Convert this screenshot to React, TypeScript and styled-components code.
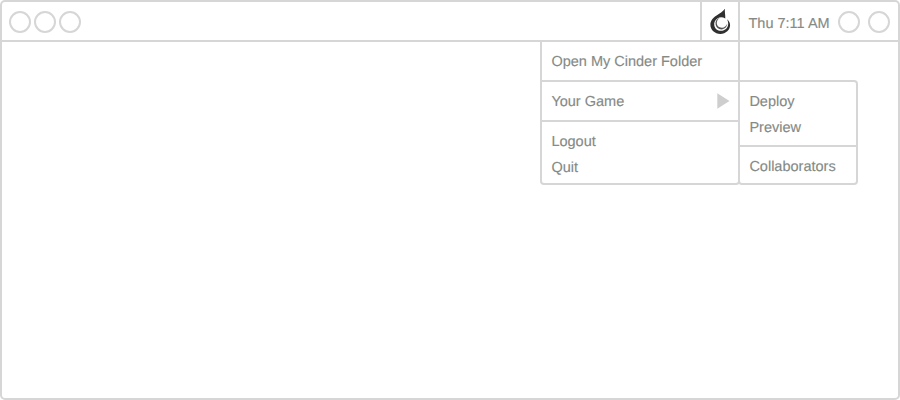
import React from "react";
import styled, { createGlobalStyle } from "styled-components";

const line = "#d6d6d6";

const GlobalStyle = createGlobalStyle`
  *, *::before, *::after { box-sizing: border-box; }
  body { margin: 0; background: #fff; }
`;

const Desktop = styled.div`
  position: relative;
  width: 900px;
  height: 400px;
  border: 2px solid ${line};
  border-radius: 5px;
  background: #fff;
  color: #858a86;
  font: 14.5px/26px "Liberation Sans", Arial, sans-serif;
  -webkit-text-stroke: 0.15px #858a86;
  text-rendering: geometricPrecision;
  white-space: nowrap;
  overflow: hidden;
`;

const MenuBar = styled.header`
  display: flex;
  align-items: stretch;
  height: 40px;
  border-bottom: 2px solid ${line};
`;

const Lights = styled.div`
  display: flex;
  flex: 1;
  align-items: center;
  gap: 3px;
  padding: 2px 0 0 7px;
`;

const Circle = styled.span`
  width: 22px;
  height: 22px;
  border: 2px solid ${line};
  border-radius: 50%;
`;

const AppSlot = styled.div`
  width: 40px;
  border: solid ${line};
  border-width: 0 2px;
`;

const Status = styled.div`
  display: flex;
  align-items: center;
  width: 158px;
  gap: 8px;
  padding: 2px 8px 0 8.5px;
`;

const Clock = styled.span<{ $width: number }>`
  width: ${(p) => p.$width}px;
  padding-top: 4px;
`;

const Menu = styled.nav<{ $x: number; $y: number; $width: number; $round: string }>`
  position: absolute;
  left: ${(p) => p.$x}px;
  top: ${(p) => p.$y}px;
  width: ${(p) => p.$width}px;
  border: 2px solid ${line};
  border-radius: ${(p) => p.$round};
`;

const Group = styled.div<{ $height: number }>`
  height: ${(p) => p.$height}px;
  padding: 7px 8px 0 9.4px;
  & + & { border-top: 2px solid ${line}; }
`;

const Item = styled.div`
  display: flex;
  align-items: center;
  justify-content: space-between;
  height: 26px;
`;

const Connector = styled.div`
  position: absolute;
  left: 736px;
  top: 38px;
  width: 6px;
  height: 42px;
  border: solid ${line};
  border-width: 0 0 2px 2px;
`;

const Flame = () => (
  <svg width="36" height="38" viewBox="702 2 36 38" aria-hidden="true">
    <path
      fill="#303030"
      d="M724.9 8.8C724.6 12 725.4 14.8 725.3 18.4C722.6 16.9 719.8 17 717.7 18.3C714.9 20 713.8 22.7 714.3 25.4C715 28.7 717.6 30.8 720.8 30.8C725.2 30.8 728.5 27.6 728.2 23.2C728.1 21.6 727.6 20.3 727 19.2C729 20.7 730.1 22.8 730.1 25.1C730.1 30.1 725.9 33.9 720.4 33.9C714.8 33.9 710.4 30 710.4 24.8C710.4 20.6 712.9 17.7 716.2 15.7C719.9 13.4 722.7 11.8 724.9 8.8Z"
    />
    <path
      fill="#555"
      d="M718.8 18.2C716.3 19.4 715.1 21.8 715.6 24.5C716.1 27.5 718.4 29.4 721.4 29.4C724.7 29.4 727.1 27 727.3 23.6C726.3 26.4 724.4 27.9 721.8 27.8C718.8 27.7 716.9 25.8 716.8 23.3C716.7 21 717.8 19 719.6 18.2Z"
    />
  </svg>
);

const Arrow = styled(({ className }: { className?: string }) => (
  <svg className={className} width="13" height="16" viewBox="0 0 13 16" aria-hidden="true">
    <path d="M0.3 0.3L12.5 8L0.3 15.7Z" fill="#cecece" />
  </svg>
))`
  margin-bottom: 2px;
`;

export default function App() {
  return (
    <>
      <GlobalStyle />
      <Desktop>
        <MenuBar>
          <Lights>
            <Circle />
            <Circle />
            <Circle />
          </Lights>
          <AppSlot>
            <Flame />
          </AppSlot>
          <Status>
            <Clock $width={81.5}>Thu 7:11 AM</Clock>
            <Circle />
            <Circle />
          </Status>
        </MenuBar>
        <Connector />
        <Menu $x={538} $y={38} $width={200} $round="0 0 4px 4px">
          <Group $height={38}>
            <Item>Open My Cinder Folder</Item>
          </Group>
          <Group $height={40}>
            <Item>
              Your Game
              <Arrow />
            </Item>
          </Group>
          <Group $height={63}>
            <Item>Logout</Item>
            <Item>Quit</Item>
          </Group>
        </Menu>
        <Menu $x={736} $y={78} $width={120} $round="0 4px 4px 4px">
          <Group $height={63}>
            <Item>Deploy</Item>
            <Item>Preview</Item>
          </Group>
          <Group $height={38}>
            <Item>Collaborators</Item>
          </Group>
        </Menu>
      </Desktop>
    </>
  );
}
